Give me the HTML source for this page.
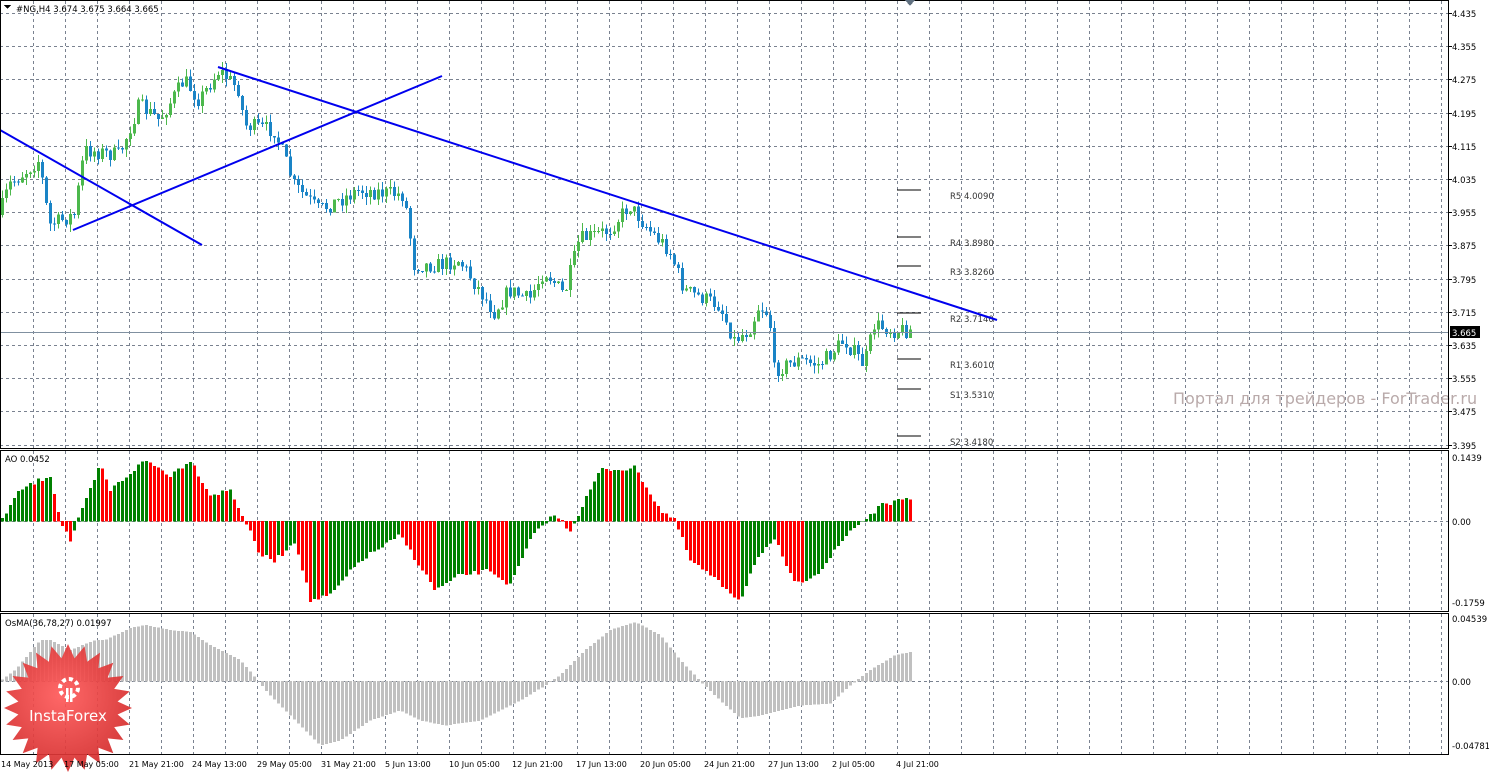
<!DOCTYPE html>
<html><head><meta charset="utf-8"><style>
html,body{margin:0;padding:0;background:#fff;}
body{width:1489px;height:773px;overflow:hidden;font-family:"DejaVu Sans","Liberation Sans",sans-serif;}
svg text{font-family:"DejaVu Sans","Liberation Sans",sans-serif;}
</style></head><body>
<svg id="s" width="1489" height="773" xmlns="http://www.w3.org/2000/svg" shape-rendering="crispEdges">
<rect width="1489" height="773" fill="#fff"/>
<g id="grid"></g>
<g id="bars"></g>
<g stroke="#000" stroke-width="1">
<line x1="897" y1="190" x2="921" y2="190"/><line x1="897" y1="237" x2="921" y2="237"/>
<line x1="897" y1="266" x2="921" y2="266"/><line x1="897" y1="313" x2="921" y2="313"/>
<line x1="897" y1="359" x2="921" y2="359"/><line x1="897" y1="389" x2="921" y2="389"/>
<line x1="897" y1="436" x2="921" y2="436"/>
</g>
<g font-size="8.5" fill="#333">
<text x="950" y="199">R5 4.0090</text><text x="950" y="246">R4 3.8980</text>
<text x="950" y="275">R3 3.8260</text><text x="950" y="322">R2 3.7140</text>
<text x="950" y="368">R1 3.6010</text><text x="950" y="398">S1 3.5310</text>
<text x="950" y="445">S2 3.4180</text>
</g>
<g stroke="#0000ee" stroke-width="2" shape-rendering="auto">
<line x1="0" y1="130" x2="202" y2="245"/>
<line x1="73" y1="230" x2="442" y2="76"/>
<line x1="218" y1="67" x2="997" y2="320"/>
</g>
<line x1="0" y1="332.5" x2="1448" y2="332.5" stroke="#8090a0"/>
<text x="1173" y="404" font-size="16" fill="#b9aaaa" font-family="Liberation Sans">Портал для трейдеров - ForTrader.ru</text>
<g fill="none" stroke="#000">
<rect x="0.5" y="0.5" width="1448" height="448"/>
<rect x="0.5" y="450.5" width="1448" height="161"/>
<rect x="0.5" y="613.5" width="1448" height="141"/>
</g>
<rect x="1450" y="326" width="30" height="12" fill="#000"/>
<g font-size="8.5" fill="#000" id="axis"></g>
<text x="1452" y="336" font-size="8.5" fill="#fff">3.665</text>
<polygon points="905,0 915,0 910,6" fill="#607080"/>
<text x="16" y="12" font-size="8.5" fill="#000">#NG,H4  3.674 3.675 3.664 3.665</text>
<polygon points="4,5 11,5 7.5,9" fill="#000"/>
<text x="5" y="462" font-size="8.5" fill="#000">AO 0.0452</text>
<text x="5" y="626" font-size="8.5" fill="#000">OsMA(36,78,27) 0.01997</text>
<defs><radialGradient id="rg" cx="0.45" cy="0.4" r="0.6"><stop offset="0" stop-color="#ff5a5a"/><stop offset="1" stop-color="#d42c2c"/></radialGradient></defs>
<polygon id="star" fill="url(#rg)" opacity="0.92" shape-rendering="auto"/>
<g font-size="8" fill="#000">
<text x="1" y="767">14 May 2013</text><text x="64" y="767">17 May 05:00</text><text x="129" y="767">21 May 21:00</text>
<text x="192" y="767">24 May 13:00</text><text x="257" y="767">29 May 05:00</text><text x="321" y="767">31 May 21:00</text>
<text x="385" y="767">5 Jun 13:00</text><text x="449" y="767">10 Jun 05:00</text><text x="512" y="767">12 Jun 21:00</text>
<text x="576" y="767">17 Jun 13:00</text><text x="640" y="767">20 Jun 05:00</text><text x="704" y="767">24 Jun 21:00</text>
<text x="768" y="767">27 Jun 13:00</text><text x="832" y="767">2 Jul 05:00</text><text x="896" y="767">4 Jul 21:00</text>
</g>
<g fill="#fff" shape-rendering="auto">
<circle cx="69" cy="688" r="9" fill="none" stroke="#fff" stroke-width="4" stroke-dasharray="4 3"/>
<rect x="66" y="688" width="2.5" height="14"/><rect x="70" y="688" width="2.5" height="14"/>
</g>
<text x="68" y="721" font-size="15" fill="#fff" text-anchor="middle" font-family="Liberation Sans">InstaForex</text>
</svg>
<script>
var NS="http://www.w3.org/2000/svg",g=document.getElementById('grid'),b=document.getElementById('bars'),ax=document.getElementById('axis');
function el(p,t,a){var e=document.createElementNS(NS,t);for(var k in a)e.setAttribute(k,a[k]);p.appendChild(e);return e;}
var dash={stroke:"#7a8290","stroke-dasharray":"3 3"};
for(var x=33;x<1448;x+=32){[[1,448],[451,611],[614,754]].forEach(function(r){el(g,'line',Object.assign({x1:x+.5,x2:x+.5,y1:r[0],y2:r[1]},dash));});}
var pl=["4.435","4.355","4.275","4.195","4.115","4.035","3.955","3.875","3.795","3.715","3.635","3.555","3.475","3.395"];
for(var i=0;i<14;i++){var y=Math.round(13+i*33.2);el(g,'line',Object.assign({x1:0,x2:1448,y1:y+.5,y2:y+.5},dash));el(ax,'text',{x:1452,y:y+4}).textContent=pl[i];el(ax,'line',{x1:1448,x2:1452,y1:y+.5,y2:y+.5,stroke:"#000"});}
el(g,'line',Object.assign({x1:0,x2:1448,y1:521.5,y2:521.5},dash));
el(g,'line',Object.assign({x1:0,x2:1448,y1:681.5,y2:681.5},dash));
[["0.1439",461],["0.00",525],["-0.1759",606],["0.04539",622],["0.00",685],["-0.04781",749]].forEach(function(a){el(ax,'text',{x:1452,y:a[1]}).textContent=a[0];});
function interp(k,x){for(var i=0;i<k.length-1;i++){if(x>=k[i][0]&&x<=k[i+1][0]){var t=(x-k[i][0])/(k[i+1][0]-k[i][0]);return k[i][1]+t*(k[i+1][1]-k[i][1]);}}return k[k.length-1][1];}
var seed=7;function rnd(){seed=(seed*16807)%2147483647;return seed/2147483647;}
var P=[[0,215],[10,185],[40,160],[50,225],[75,215],[85,150],[120,155],[140,105],[160,120],[185,80],[200,100],[220,70],[240,90],[245,125],[275,130],[295,185],[320,210],[360,190],[405,195],[415,265],[440,265],[460,260],[480,290],[495,312],[510,290],[530,300],[545,270],[565,295],[580,240],[610,230],[630,205],[650,230],[670,250],[685,290],[720,305],[735,340],[750,330],[760,305],[770,315],[775,370],[800,360],[820,365],[845,340],[865,365],[875,325],[895,330],[910,330]];
var prev=interp(P,0);
for(var x=1;x<=910;x+=4){var c=interp(P,x+2)+(rnd()-0.5)*16;var o=prev;var hi=Math.min(o,c)-rnd()*8,lo=Math.max(o,c)+rnd()*8;var up=c<o;var col=up?"#4cb84c":"#1a84c6";
el(b,'line',{x1:x+1.5,x2:x+1.5,y1:hi,y2:lo,stroke:col});el(b,'rect',{x:x,y:Math.min(o,c),width:3,height:Math.max(1,Math.abs(c-o)),fill:col});prev=c;}
var A=[[0,521],[20,490],[50,475],[60,520],[70,540],[80,515],[100,465],[110,490],[145,460],[170,475],[190,460],[210,495],[230,490],[245,521],[260,555],[275,560],[295,540],[310,600],[330,595],[360,560],[400,535],[435,590],[460,575],[490,570],[510,585],[530,540],[545,521],[555,515],[570,530],[585,500],[600,470],[635,468],[660,510],[675,521],[690,560],[710,575],[740,600],[755,560],[775,540],[795,585],[820,570],[850,530],[870,515],[885,503],[910,500]];
var pv=null;for(var x=1;x<=910;x+=4){var v=interp(A,x+1)+(rnd()-0.5)*5;var up=pv===null||v<pv;var col=up?"#008000":"#ff0000";
el(b,'rect',{x:x,y:Math.min(v,521),width:3,height:Math.abs(v-521)+0.5,fill:col});pv=v;}
var O=[[0,681],[15,670],[40,640],[50,640],[70,650],[95,640],[105,640],[130,628],[145,625],[170,630],[190,632],[210,645],[240,660],[258,681],[270,695],[290,715],[320,745],[340,740],[370,720],[400,710],[420,720],[445,725],[480,720],[520,700],[545,685],[560,675],[585,650],[610,630],[635,622],[660,635],[680,660],[700,681],[720,700],[740,718],[760,715],[780,710],[800,705],[830,703],[850,685],[870,670],[895,655],[910,652]];
for(var x=1;x<=910;x+=4){var v=interp(O,x+1);el(b,'rect',{x:x,y:Math.min(v,681),width:3,height:Math.abs(v-681)+0.5,fill:"#c0c0c0"});}
var pts=[],cx=68,cy=708;for(var i=0;i<48;i++){var r=i%2?50:64,a=i*Math.PI/24-Math.PI/2;pts.push((cx+r*Math.cos(a)).toFixed(1)+","+(cy+r*Math.sin(a)).toFixed(1));}
document.getElementById('star').setAttribute('points',pts.join(' '));
</script>
</body></html>
